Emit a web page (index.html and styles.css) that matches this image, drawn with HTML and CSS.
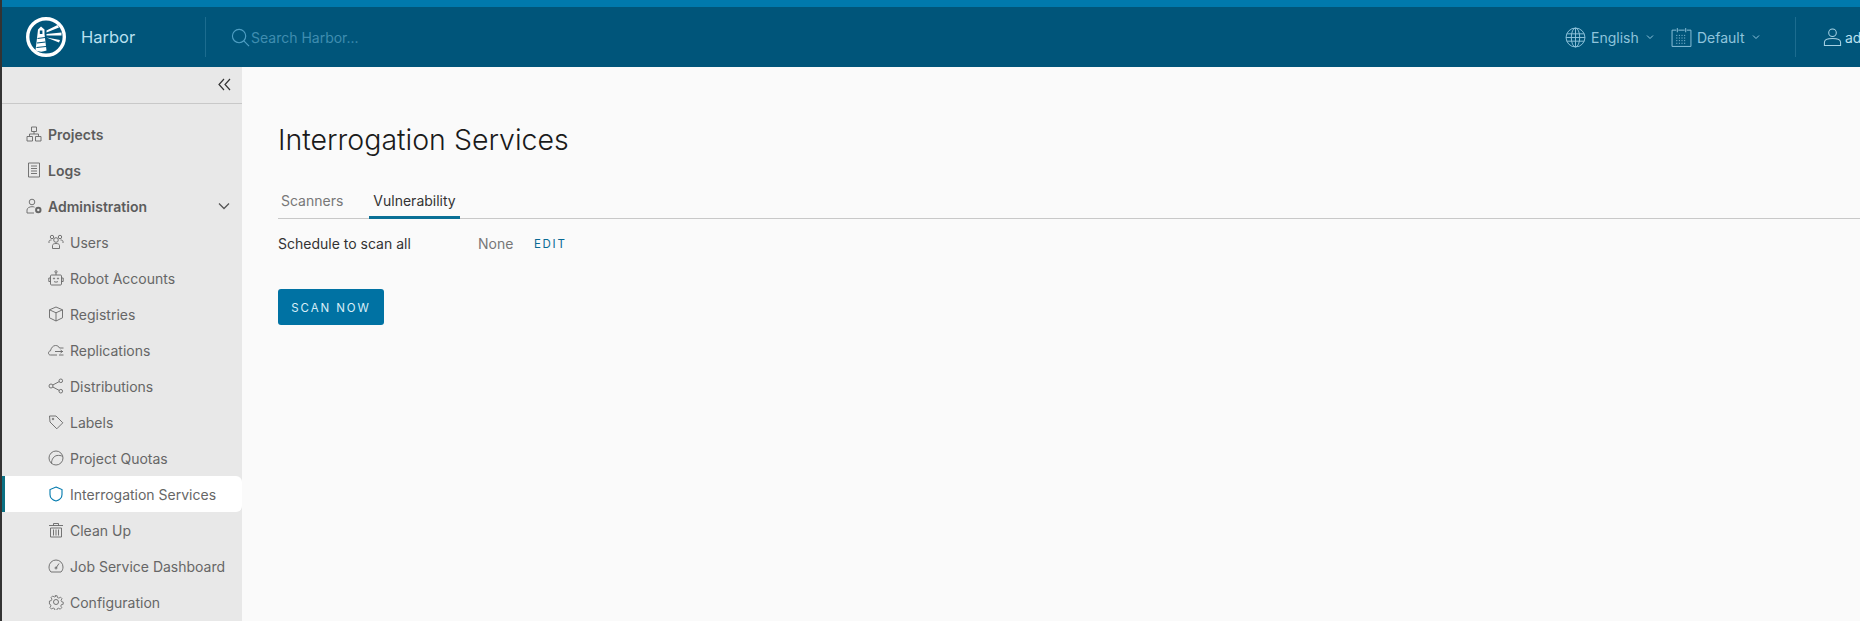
FILE: index.html
```html
<!DOCTYPE html>
<html lang="en">
<head>
<meta charset="utf-8">
<title>Harbor</title>
<link rel="stylesheet" href="styles.css">
</head>
<body>
<div class="app">
  <header class="topbar">
    <div class="brand">
      <svg class="logo" viewBox="0 0 40 40" fill="none">
        <circle cx="20" cy="20" r="18.300" stroke="#fff" stroke-width="3.400"/>
        <path d="M12 12.500L15 9.500L18.500 12.500V17L20.500 33.500C17 35 13.500 35 9.500 33.500L11.500 17Z" fill="#fff"/>
        <path d="M13.800 13.500h2.600v3.500h-2.600z" fill="#00557a"/>
        <path d="M11.500 21.500l7.500-1M11 26l8.500-1M10.500 30.500l9.500-1" stroke="#00557a" stroke-width="1.200"/>
        <path d="M20.500 13.500L31.500 8L33 10.500L20.500 15.500ZM20.500 17L35.500 15.500V18.500L20.500 18.500ZM20.500 20.500L34 23L33 25.500Z" fill="#fff"/>
      </svg>
      <span class="brand-name">Harbor</span>
    </div>
    <div class="search">
      <svg class="search-icon" viewBox="0 0 20 20" fill="none" stroke="#4f9fc4" stroke-width="1.200">
        <circle cx="8.500" cy="8.500" r="7"/><path d="M13.500 13.500L19 19"/>
      </svg>
      <span class="search-text">Search Harbor...</span>
    </div>
    <div class="top-actions">
      <div class="drop drop-lang">
        <svg class="top-icon" viewBox="0 0 20 20" fill="none" stroke="#8fc4dc" stroke-width="0.900">
          <circle cx="10" cy="10" r="9"/><ellipse cx="10" cy="10" rx="4" ry="9"/><path d="M10 1v18M1.800 6.500h16.400M1 10h18M1.800 13.500h16.400"/>
        </svg>
        <span>English</span>
        <svg class="caret" viewBox="0 0 8 6" fill="none" stroke="#8fc4dc" stroke-width="1"><path d="M1 1.500l3 3 3-3"/></svg>
      </div>
      <div class="drop drop-theme">
        <svg class="top-icon" viewBox="0 0 20 20" fill="none" stroke="#8fc4dc" stroke-width="0.900">
          <path d="M5 3H1v15.500h18V3h-4M7 3h6M6 1v4M14 1v4"/>
          <path d="M5 8h10M5 10.500h10M5 13h10M5 15.500h10" stroke-dasharray="1 1.500"/>
        </svg>
        <span>Default</span>
        <svg class="caret" viewBox="0 0 8 6" fill="none" stroke="#8fc4dc" stroke-width="1"><path d="M1 1.500l3 3 3-3"/></svg>
      </div>
      <div class="user">
        <svg class="user-icon" viewBox="0 0 20 20" fill="none" stroke="#a6d2e4" stroke-width="1.100">
          <circle cx="10" cy="5.500" r="4"/><path d="M1.500 19v-3.500c0-2.500 4-4 8.500-4s8.500 1.500 8.500 4V19z"/>
        </svg>
        <span>admin</span>
      </div>
    </div>
  </header>
  <div class="body">
    <nav class="sidebar">
      <div class="collapse">
        <svg class="collapse-icon" viewBox="0 0 13 13" fill="none" stroke="#333" stroke-width="1.200"><path d="M6 1L1 6.500L6 12M12 1L7 6.500L12 12"/></svg>
      </div>
      <ul class="menu">
        <li class="item main">
          <svg class="ico" viewBox="0 0 16 16"><path d="M5.500 1h5v4.500h-5zM1 10.500h5.500V15H1zM9.500 10.500H15V15H9.500zM8 5.500V8M3.500 10.500V8h9v2.500"/></svg>
          <span>Projects</span>
        </li>
        <li class="item main">
          <svg class="ico" viewBox="0 0 16 16"><path d="M2.500 1h11v14h-11zM5 4h6M5 6.500h6M5 9h6M5 11.500h6"/></svg>
          <span>Logs</span>
        </li>
        <li class="item main">
          <svg class="ico" viewBox="0 0 16 16"><circle cx="6" cy="4" r="2.800"/><path d="M1 15v-3c0-2 2.500-3.300 5-3.300 1 0 1.800.1 2.500.4M1 15h7"/><circle cx="12.300" cy="12" r="2.200" stroke-width="2"/></svg>
          <span class="grow">Administration</span>
          <svg class="chev" viewBox="0 0 12 8" fill="none" stroke="#565656" stroke-width="1.300"><path d="M1 1.500l5 5 5-5"/></svg>
        </li>
        <li class="item sub">
          <svg class="ico" viewBox="0 0 16 16"><circle cx="8" cy="6" r="2.300"/><path d="M4.500 14.500v-3c0-1.300 1.500-2 3.500-2s3.500.7 3.500 2v3zM1 9V7.500C1 6.500 2 6 3.500 6M15 9V7.500C15 6.500 14 6 12.500 6"/><circle cx="4" cy="3" r="1.700"/><circle cx="12" cy="3" r="1.700"/></svg>
          <span>Users</span>
        </li>
        <li class="item sub">
          <svg class="ico" viewBox="0 0 16 16"><circle cx="8" cy="1.800" r="1.100"/><path d="M8 3v2M3.500 5h9c.6 0 1 .4 1 1v8c0 .6-.4 1-1 1h-9c-.6 0-1-.4-1-1V6c0-.6.4-1 1-1zM2.500 8H.8v3.500h1.700M13.500 8h1.700v3.500h-1.700M6 11.500c1 .8 3 .8 4 0"/><circle cx="6" cy="8.500" r=".6"/><circle cx="10" cy="8.500" r=".6"/></svg>
          <span>Robot Accounts</span>
        </li>
        <li class="item sub">
          <svg class="ico" viewBox="0 0 16 16"><path d="M8 1l6.500 2.800v8L8 15l-6.500-3.200v-8zM1.500 3.800L8 6.800l6.500-3M8 6.800V15"/></svg>
          <span>Registries</span>
        </li>
        <li class="item sub">
          <svg class="ico" viewBox="0 0 16 16"><path d="M9 13H2.500C1 13 .5 12 .5 11c0-1.200.8-2 2-2.200C3 6 5 3.500 7.500 3.500c2 0 3.300 1 4 2.500H15.500M15.500 13H11M7 9.500h8M12.500 8l2 1.500-2 1.500"/></svg>
          <span>Replications</span>
        </li>
        <li class="item sub">
          <svg class="ico" viewBox="0 0 16 16"><circle cx="3" cy="8" r="2"/><circle cx="12.800" cy="2.800" r="1.800"/><circle cx="12.800" cy="13.200" r="1.800"/><path d="M4.800 7l6.400-3.400M4.800 9l6.400 3.400"/></svg>
          <span>Distributions</span>
        </li>
        <li class="item sub">
          <svg class="ico" viewBox="0 0 16 16"><path d="M1.500 2H8l6.800 6.800-6 6L2 8z"/><circle cx="5" cy="5" r=".8"/></svg>
          <span>Labels</span>
        </li>
        <li class="item sub">
          <svg class="ico" viewBox="0 0 16 16"><circle cx="8" cy="8" r="7"/><path d="M3.500 13.500C3.500 9 6 6 9 5.500c2-.3 4 0 5.500.8"/></svg>
          <span>Project Quotas</span>
        </li>
        <li class="item sub active">
          <svg class="ico ico-active" viewBox="0 0 16 16"><path d="M8 1l6 2.500v5c0 3-2.500 5.500-6 6.500-3.500-1-6-3.500-6-6.500v-5z"/></svg>
          <span>Interrogation Services</span>
        </li>
        <li class="item sub">
          <svg class="ico" viewBox="0 0 16 16"><path d="M1 3.500h14M5.500 3.500V1.500h5v2M2.500 6h11v9h-11zM5.500 7.500v6M8 7.500v6M10.500 7.500v6"/></svg>
          <span>Clean Up</span>
        </li>
        <li class="item sub">
          <svg class="ico" viewBox="0 0 16 16"><path d="M3 14C1.700 12.800 1 11 1 9a7 7 0 0 1 14 0c0 2-.7 3.800-2 5zM8 10l3-4.500"/><circle cx="8" cy="10" r="1"/></svg>
          <span>Job Service Dashboard</span>
        </li>
        <li class="item sub">
          <svg class="ico" viewBox="0 0 16 16"><circle cx="8" cy="8" r="2.500"/><path d="M6.800 1h2.400l.4 2 1.600.7 1.800-1.100 1.700 1.700-1.100 1.800.7 1.600 1.700.4v2.400l-2 .4-.7 1.600 1.100 1.800-1.700 1.700-1.800-1.100-1.600.7-.4 1.800H6.800l-.4-2-1.600-.7-1.800 1.100-1.700-1.700 1.100-1.800-.7-1.600-1-.4V6.900l2-.4.7-1.600L2.600 3l1.700-1.700 1.800 1.100 1.600-.7z" transform="translate(.8 .8) scale(.9)"/></svg>
          <span>Configuration</span>
        </li>
      </ul>
    </nav>
    <main class="content">
      <h1 class="title">Interrogation Services</h1>
      <div class="tabs">
        <span class="tab">Scanners</span>
        <span class="tab tab-active">Vulnerability</span>
      </div>
      <div class="schedule">
        <span class="schedule-label">Schedule to scan all</span>
        <span class="schedule-value">None</span>
        <span class="edit">EDIT</span>
      </div>
      <button class="scan" type="button">SCAN NOW</button>
    </main>
  </div>
</div>
</body>
</html>
```
FILE: styles.css
```css
* { box-sizing: border-box; }
html, body { margin: 0; height: 100%; overflow: hidden; }
body { background: #333; font-family: "Inter", "Liberation Sans", sans-serif; }
.app { margin-left: 2px; height: 621px; width: 1858px; display: flex; flex-direction: column; overflow: hidden; }
.topbar { flex: 0 0 67px; display: flex; align-items: center; background: #00557a; border-top: 7px solid #0079ad; color: #a6d2e4; }
.brand { width: 204px; height: 40px; display: flex; align-items: center; padding-left: 24px; border-right: 1px solid #1c6c8f; }
.logo { width: 40px; height: 40px; }
.brand-name { margin-left: 15px; font-size: 16.500px; color: #b9e0f0; }
.search { display: flex; align-items: center; margin-left: 25px; flex: 1; }
.search-icon { width: 19px; height: 19px; margin-right: 1px; }
.search-text { font-size: 14px; color: #3f8db0; }
.top-actions { display: flex; align-items: center; flex: none; width: 294px; height: 40px; }
.drop { display: flex; align-items: center; font-size: 14px; color: #8fc4dc; }
.drop-lang { width: 106px; margin-left: -1px; }
.drop-theme { width: 124px; }
.top-icon { width: 21px; height: 21px; margin-right: 5px; }
.caret { width: 8px; height: 6px; margin-left: 7px; }
.user { height: 40px; width: 65px; flex: none; display: flex; align-items: center; padding-left: 27px; border-left: 1px solid #1c6c8f; font-size: 14px; color: #b9e0f0; white-space: nowrap; }
.user-icon { width: 19px; height: 20px; margin-right: 3px; flex: none; }
.body { flex: 1; display: flex; min-height: 0; background: #fafafa; }
.sidebar { width: 240px; flex: none; background: #e8e8e8; }
.collapse { height: 37px; border-bottom: 1px solid #c8c8c8; display: flex; align-items: center; justify-content: flex-end; padding: 0 11px 1px 0; }
.collapse-icon { width: 13px; height: 13px; }
.menu { list-style: none; margin: 0; padding: 12px 0 0; }
.item { height: 36px; display: flex; align-items: center; font-size: 14px; color: #666; white-space: nowrap; }
.main { padding-left: 24px; font-weight: 600; color: #5c5c5c; }
.sub { padding-left: 46px; }
.ico { width: 16px; height: 16px; margin-right: 6px; flex: none; fill: none; stroke: #666; stroke-width: .9; }
.ico-active { stroke: #0079ad; stroke-width: 1.100; }
.grow { flex: 1; }
.chev { width: 12px; height: 8px; margin-right: 12px; }
.active { background: #fff; border-left: 3px solid #0a7083; padding-left: 43px; border-radius: 0 6px 6px 0; }
.content { flex: 1; padding: 58px 0 0 36px; min-width: 0; }
.title { margin: 0; font-size: 28.500px; line-height: 30px; font-weight: 300; color: #1a1a1a; }
.tabs { margin-top: 28px; height: 36px; display: flex; align-items: stretch; border-bottom: 1px solid #c8c8c8; }
.tab { padding: 0 3px; margin-right: 23px; font-size: 14px; line-height: 36px; color: #777; }
.tab-active { color: #333; height: 36px; padding: 0 4px; border-bottom: 3px solid #0a7096; }
.schedule { height: 48px; display: flex; align-items: center; padding-top: 1px; font-size: 14px; }
.schedule-label { width: 200px; color: #333; }
.schedule-value { width: 56px; color: #777; }
.edit { font-size: 11.500px; font-weight: 400; letter-spacing: 1.700px; color: #0a6a94; }
.scan { display: block; margin-top: 22px; width: 106px; height: 36px; padding: 1px 0 0; border: 0; border-radius: 3px; background: #0072a3; color: #d8eef8; font-family: inherit; font-size: 11.500px; font-weight: 400; letter-spacing: 1.900px; }
```
